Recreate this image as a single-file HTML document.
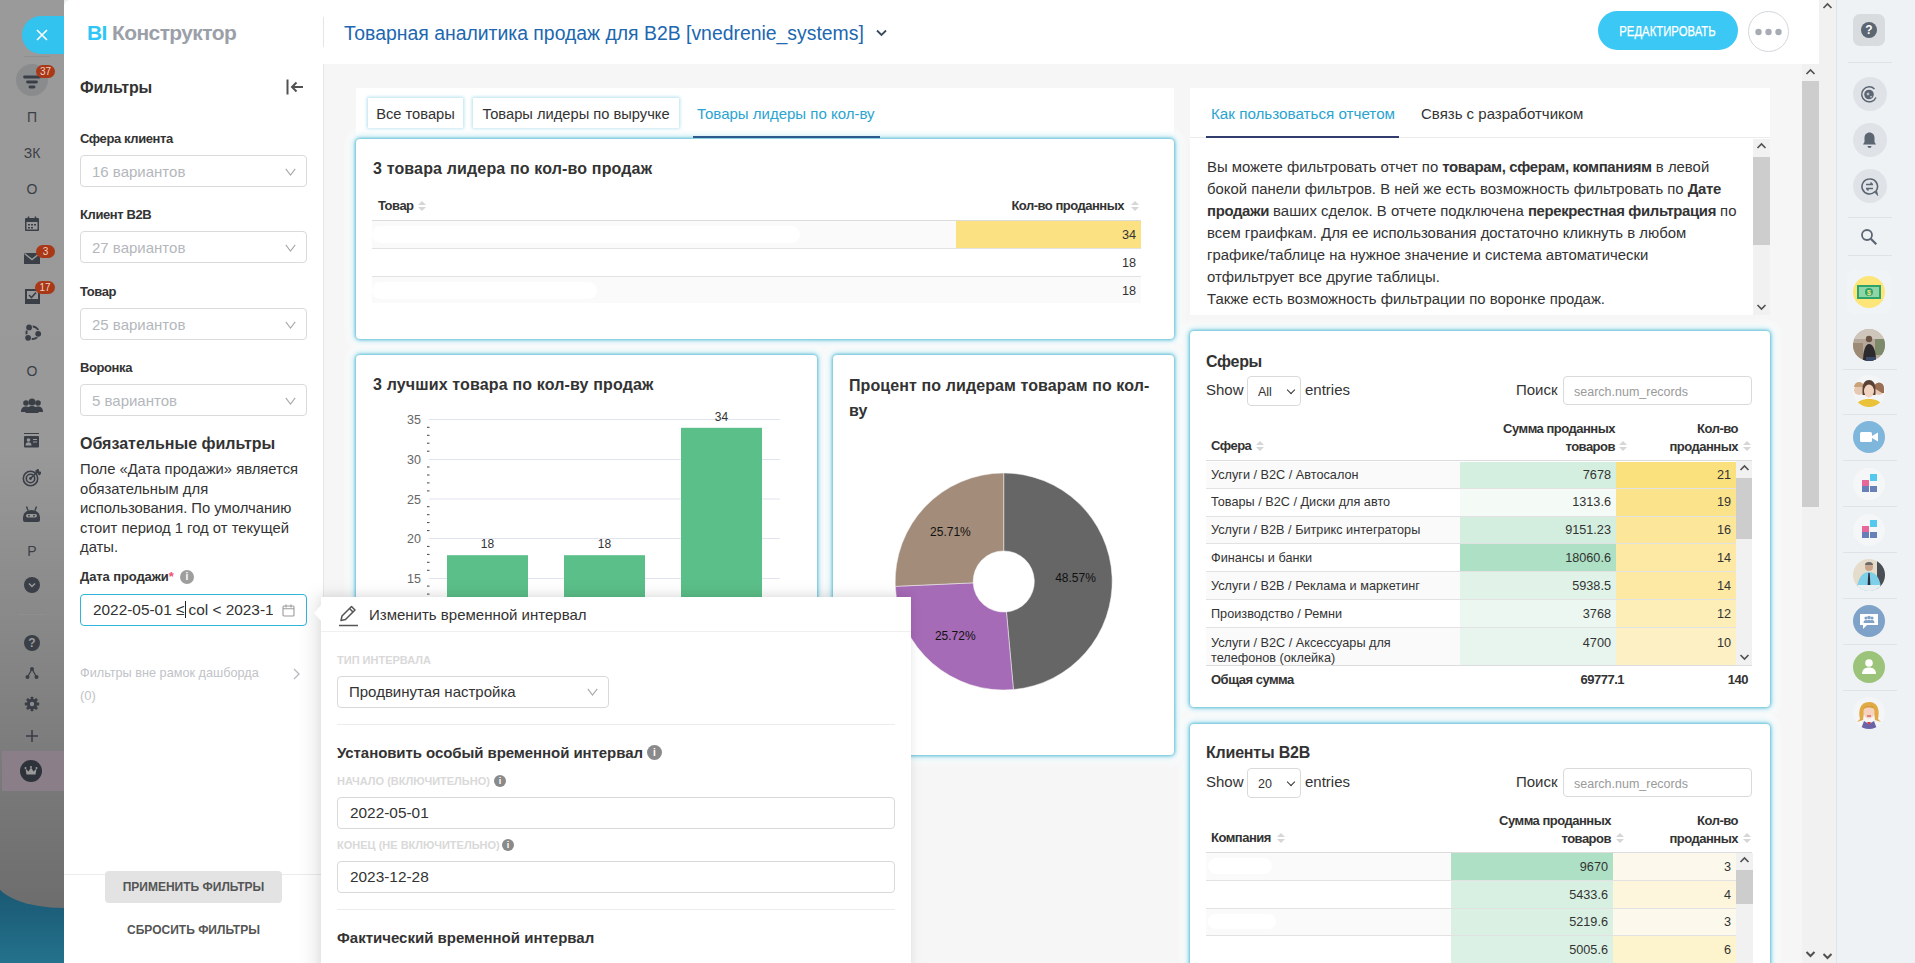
<!DOCTYPE html>
<html><head><meta charset="utf-8">
<style>
*{box-sizing:border-box;margin:0;padding:0}
html,body{width:1915px;height:963px;overflow:hidden;background:#fff;font-family:"Liberation Sans",sans-serif;color:#333}
.a{position:absolute}
#lside{left:-5px;top:0;width:69px;height:908px;background:linear-gradient(#9a9a9a 0px,#999 450px,#6d6d6d 908px);border-bottom-left-radius:80px 34px}
#teal{left:0;top:860px;width:64px;height:103px;background:linear-gradient(#17506a,#1d5f7a 50px,#24728d 103px)}
#panel{left:64px;top:0;width:1755px;height:963px;background:#fff;border-top-left-radius:6px}
#main{left:323px;top:64px;width:1479px;height:899px;background:#f6f6f6;border-left:1px solid #e6e6e6}
#rbar{left:1836px;top:0;width:79px;height:963px;background:#eef2f4;border-left:1px solid #dfe5ea}
#oscroll{left:1819px;top:0;width:17px;height:963px;background:#f1f1f1}
#iscroll{left:1802px;top:64px;width:17px;height:899px;background:#f1f1f1}
.sbt{left:0;width:64px;text-align:center;font-size:14px;line-height:18px;color:#3a3f47}
.card{background:#fff;border-radius:4px;box-shadow:0 0 3px 1px rgba(80,185,212,.85),0 0 6px 3px rgba(130,208,228,.45),0 0 6px 8px rgba(255,255,255,.9)}
.lbl{font-size:13px;font-weight:bold;color:#333;letter-spacing:-0.4px}
.rbc{left:1853px;width:34px;height:34px;border-radius:50%;background:#dfe3e7}
.rbav{left:1853px;width:32px;height:32px;border-radius:50%}
.tbtn{height:30px;background:#fff;box-shadow:0 0 3px 1px rgba(120,200,225,.55);font-size:14.7px;line-height:32px;text-align:center;color:#333;white-space:nowrap}
.wt{font-size:16px;font-weight:bold;line-height:22px;color:#333;white-space:nowrap;letter-spacing:0.15px}
.th{font-size:13px;font-weight:bold;line-height:17px;color:#333;white-space:nowrap;letter-spacing:-0.5px}
.td{font-size:12.7px;line-height:19px;color:#333;white-space:nowrap}
.r{text-align:right}
#infotext b{letter-spacing:-0.35px}
.srt{width:8px;height:11px;margin:1px 0 0 1px}
.srt:before{content:"";position:absolute;left:0;top:0;border-left:4px solid transparent;border-right:4px solid transparent;border-bottom:4.5px solid #d6d6d6}
.srt:after{content:"";position:absolute;left:0;top:5.5px;border-left:4px solid transparent;border-right:4px solid transparent;border-top:4.5px solid #d6d6d6}
.sh{font-size:15px;line-height:20px;color:#333;white-space:nowrap}
.ssel{width:54px;height:30px;border:1px solid #dadada;border-radius:4px;font-size:12.5px;line-height:30px;padding-left:10px;color:#333}
.ssel:after{content:"";position:absolute;left:40px;top:10px;width:5px;height:5px;border-right:1.5px solid #333;border-bottom:1.5px solid #333;transform:rotate(45deg)}
.sinp{width:189px;height:29px;border:1px solid #dadada;border-radius:4px;font-size:12.5px;line-height:30px;padding-left:10px;color:#9a9a9a;background:#fff}
.plb{font-size:11px;font-weight:bold;line-height:15px;color:#d9d9d9;margin-top:1px;white-space:nowrap}
.pinf{border-radius:50%;background:#8a8a8a;color:#fff;text-align:center;font-weight:bold}
.pinp{width:558px;height:32px;border:1px solid #d9d9d9;border-radius:4px;font-size:15.4px;line-height:30px;padding-left:12px;color:#333}
.sel{width:227px;height:32px;border:1px solid #dadada;border-radius:4px;font-size:15px;color:#b4b7bc;padding:7px 0 0 11px}
.chev{position:absolute;left:204px;top:12px}
</style></head><body>
<div id="teal" class="a"></div>
<div id="lside" class="a"></div>
<div class="a" style="left:64px;top:0;width:10px;height:10px;background:#e9eef1"></div>
<div id="panel" class="a"></div>
<div id="main" class="a"></div>
<div id="oscroll" class="a"></div>
<div id="iscroll" class="a"></div>
<div id="rbar" class="a"></div>


<!-- left sidebar icons -->
<div class="a" style="left:22px;top:16px;width:42px;height:38px;background:#33c3ef;border-radius:19px 0 0 19px"></div>
<svg class="a" style="left:35px;top:28px" width="14" height="14" viewBox="0 0 14 14"><path d="M2 2l10 10M12 2L2 12" stroke="#fff" stroke-width="1.6"/></svg>
<div class="a" style="left:24px;top:56px;width:26px;height:1px;background:#8f8f8f"></div>
<div class="a" style="left:16px;top:64px;width:32px;height:32px;border-radius:50%;background:#8a8b8d"></div>
<svg class="a" style="left:23px;top:74px" width="18" height="16" viewBox="0 0 18 16"><path d="M1.5 3h15M4.5 8h9M7 13h4" stroke="#3a3f47" stroke-width="2.8" stroke-linecap="round"/></svg>
<div class="a" style="left:36px;top:65px;width:19px;height:13px;border-radius:7px;background:#a93817;color:#f0d0c4;font-size:10px;line-height:13px;text-align:center">37</div>
<div class="a sbt" style="top:108px">П</div>
<div class="a sbt" style="top:144px">ЗК</div>
<div class="a sbt" style="top:180px">О</div>
<svg class="a" style="left:23px;top:215px" width="18" height="18" viewBox="0 0 18 18"><rect x="2" y="3" width="14" height="13" rx="1" fill="#3a3f47"/><rect x="3.5" y="7" width="11" height="7.5" fill="#9a9a9a"/><path d="M5 9h2v1.5H5zM8 9h2v1.5H8zM11 9h2v1.5h-2zM5 12h2v1.5H5zM8 12h2v1.5H8z" fill="#3a3f47"/><path d="M5.5 1.5v3M12.5 1.5v3" stroke="#3a3f47" stroke-width="1.6"/></svg>
<svg class="a" style="left:24px;top:252px" width="16" height="13" viewBox="0 0 16 13"><path d="M0 1h16v11H0z" fill="#3a3f47"/><path d="M0.5 1.5l7.5 6 7.5-6" stroke="#9a9a9a" stroke-width="1.4" fill="none"/></svg>
<div class="a" style="left:36px;top:245px;width:19px;height:13px;border-radius:7px;background:#a93817;color:#f0d0c4;font-size:10px;line-height:13px;text-align:center">3</div>
<svg class="a" style="left:24px;top:288px" width="17" height="17" viewBox="0 0 17 17"><rect x="1" y="1" width="15" height="15" fill="#3a3f47"/><rect x="3" y="3" width="11" height="8" fill="#9a9a9a"/><path d="M5 7l2.5 2.5L12 4.5" stroke="#3a3f47" stroke-width="1.6" fill="none"/></svg>
<div class="a" style="left:35px;top:281px;width:20px;height:13px;border-radius:7px;background:#a93817;color:#f0d0c4;font-size:10px;line-height:13px;text-align:center">17</div>
<svg class="a" style="left:23px;top:322px" width="20" height="20" viewBox="0 0 20 20"><circle cx="9.6" cy="10.8" r="6.2" fill="none" stroke="#3a3f47" stroke-width="2"/><circle cx="6.1" cy="5.4" r="3.8" fill="#999"/><circle cx="15.2" cy="11.8" r="3.8" fill="#999"/><circle cx="5.1" cy="15.8" r="3.8" fill="#999"/><circle cx="6.1" cy="5.4" r="2.9" fill="#3a3f47"/><circle cx="15.2" cy="11.8" r="2.9" fill="#3a3f47"/><circle cx="5.1" cy="15.8" r="2.9" fill="#3a3f47"/></svg>
<div class="a sbt" style="top:362px">О</div>
<svg class="a" style="left:21px;top:397px" width="22" height="16" viewBox="0 0 22 16"><circle cx="11" cy="5" r="3.5" fill="#3a3f47"/><circle cx="5" cy="6" r="2.8" fill="#3a3f47"/><circle cx="17" cy="6" r="2.8" fill="#3a3f47"/><path d="M4.5 16c0-5 3-7 6.5-7s6.5 2 6.5 7z" fill="#3a3f47"/><path d="M0 15c0-4 2-5.5 5-5.5 1 0 2 .3 2.5 1L5 15zM22 15c0-4-2-5.5-5-5.5-1 0-2 .3-2.5 1L17 15z" fill="#3a3f47"/></svg>
<svg class="a" style="left:23px;top:433px" width="17" height="15" viewBox="0 0 17 15"><path d="M1 0.5h15" stroke="#3a3f47" stroke-width="1"/><rect x="1" y="3" width="15" height="11.5" rx="1" fill="#3a3f47"/><circle cx="5.5" cy="7" r="1.8" fill="#9a9a9a"/><path d="M2.5 12.5c0-2.5 1.3-3.3 3-3.3s3 .8 3 3.3z" fill="#9a9a9a"/><path d="M10 6.5h4M10 9h4" stroke="#9a9a9a" stroke-width="1.2"/></svg>
<svg class="a" style="left:22px;top:469px" width="19" height="18" viewBox="0 0 19 18"><circle cx="8.5" cy="9.5" r="7.2" fill="none" stroke="#3a3f47" stroke-width="1.6"/><circle cx="8.5" cy="9.5" r="4.2" fill="none" stroke="#3a3f47" stroke-width="1.6"/><circle cx="8.5" cy="9.5" r="1.4" fill="#3a3f47"/><path d="M8.5 9.5L16 2M13.5 2.5l2.5-2 .5 2.5 2.5.5-2 2.5" stroke="#3a3f47" stroke-width="1.5" fill="#3a3f47"/></svg>
<svg class="a" style="left:22px;top:506px" width="19" height="17" viewBox="0 0 19 17"><path d="M4.5 0.5l1.5 4M14.5 0.5l-1.5 4" stroke="#3a3f47" stroke-width="1.4"/><path d="M1 12c0-5 3.5-8 8.5-8s8.5 3 8.5 8v2a2 2 0 0 1-2 2H3a2 2 0 0 1-2-2z" fill="#3a3f47"/><rect x="4" y="8" width="11" height="3.5" rx="1.7" fill="#9a9a9a"/><circle cx="7" cy="9.7" r=".9" fill="#3a3f47"/><circle cx="12" cy="9.7" r=".9" fill="#3a3f47"/></svg>
<div class="a sbt" style="top:542px">Р</div>
<div class="a" style="left:24px;top:577px;width:16px;height:16px;border-radius:50%;background:#3a3f47"></div>
<svg class="a" style="left:27px;top:581px" width="10" height="8" viewBox="0 0 10 8"><path d="M2 2.5l3 3 3-3" stroke="#9a9a9a" stroke-width="1.5" fill="none"/></svg>
<div class="a" style="left:18px;top:614px;width:28px;height:1px;background:#8e8e8e"></div>
<div class="a" style="left:24px;top:635px;width:16px;height:16px;border-radius:50%;background:#3a3f47;color:#9a9a9a;font-weight:bold;font-size:12px;line-height:16px;text-align:center">?</div>
<svg class="a" style="left:24px;top:665px" width="16" height="16" viewBox="0 0 16 16"><circle cx="8" cy="4" r="2" fill="#3a3f47"/><circle cx="3.5" cy="12" r="2" fill="#3a3f47"/><circle cx="12.5" cy="12" r="2" fill="#3a3f47"/><path d="M8 4L3.5 12M8 4l4.5 8" stroke="#3a3f47" stroke-width="1.3"/></svg>
<svg class="a" style="left:24px;top:696px" width="16" height="16" viewBox="0 0 16 16"><g fill="#3a3f47"><circle cx="8" cy="8" r="5.2"/><rect x="6.6" y="0.8" width="2.8" height="14.4" rx=".6"/><rect x="0.8" y="6.6" width="14.4" height="2.8" rx=".6"/><rect x="6.6" y="0.8" width="2.8" height="14.4" rx=".6" transform="rotate(45 8 8)"/><rect x="6.6" y="0.8" width="2.8" height="14.4" rx=".6" transform="rotate(-45 8 8)"/></g><circle cx="8" cy="8" r="2.2" fill="#8d8d8d"/></svg>
<svg class="a" style="left:24px;top:728px" width="16" height="16" viewBox="0 0 16 16"><path d="M8 2v12M2 8h12" stroke="#3a3f47" stroke-width="1.6"/></svg>
<div class="a" style="left:2px;top:751px;width:62px;height:40px;background:#8a7e88"></div>
<div class="a" style="left:20px;top:760px;width:22px;height:22px;border-radius:50%;background:#2e333b"></div>
<svg class="a" style="left:24px;top:765px" width="14" height="12" viewBox="0 0 14 12"><path d="M1.5 3.5l3 3 2.5-4 2.5 4 3-3-1 6H2.5z" fill="#9a9a9a"/><circle cx="1.5" cy="3" r="1" fill="#9a9a9a"/><circle cx="7" cy="2" r="1" fill="#9a9a9a"/><circle cx="12.5" cy="3" r="1" fill="#9a9a9a"/></svg>
<!-- header -->
<div class="a" style="left:87px;top:18.5px;font-size:21px;line-height:28px;font-weight:bold;color:#9ba0a8;letter-spacing:-0.6px;white-space:nowrap"><span style="color:#2fc6f6">BI</span> Конструктор</div>
<div class="a" style="left:323px;top:17px;width:1px;height:30px;background:#e3e5e8"></div>

<div class="a" style="left:344px;top:19px;font-size:19.4px;line-height:28px;color:#2067b0;white-space:nowrap" id="ttl">Товарная аналитика продаж для B2B [vnedrenie_systems]</div>
<svg class="a" style="left:875px;top:28px" width="13" height="10" viewBox="0 0 13 10"><path d="M2 2.5l4.5 4.5L11 2.5" stroke="#3a4a5c" stroke-width="1.8" fill="none"/></svg>
<div class="a" style="left:1598px;top:11px;width:140px;height:39px;border-radius:20px;background:#3bc8f5;color:#fff;font-size:14px;line-height:41px;text-align:center;-webkit-text-stroke:0.25px #fff"><span id="edt" style="display:inline-block;transform:scaleX(0.81)">РЕДАКТИРОВАТЬ</span></div>
<div class="a" style="left:1748px;top:11px;width:41px;height:41px;border-radius:50%;border:1px solid #d3d7dc;background:#fff"></div>
<svg class="a" style="left:1753px;top:26.5px" width="30" height="10" viewBox="0 0 30 10"><circle cx="5.5" cy="5" r="3.2" fill="#a7acb4"/><circle cx="15.5" cy="5" r="3.2" fill="#a7acb4"/><circle cx="25.5" cy="5" r="3.2" fill="#a7acb4"/></svg>
<!-- scroll arrows -->
<svg class="a" style="left:1821px;top:1px" width="13" height="10" viewBox="0 0 13 10"><path d="M2.5 7l4-4 4 4" stroke="#505050" stroke-width="1.6" fill="none"/></svg>
<svg class="a" style="left:1821px;top:951px" width="13" height="10" viewBox="0 0 13 10"><path d="M2.5 3l4 4 4-4" stroke="#505050" stroke-width="2" fill="none"/></svg>
<svg class="a" style="left:1804px;top:67px" width="13" height="10" viewBox="0 0 13 10"><path d="M2.5 7l4-4 4 4" stroke="#505050" stroke-width="1.6" fill="none"/></svg>
<div class="a" style="left:1802px;top:81px;width:17px;height:426px;background:#cdcdcd"></div>
<svg class="a" style="left:1804px;top:948.5px" width="13" height="10" viewBox="0 0 13 10"><path d="M2.5 3l4 4 4-4" stroke="#505050" stroke-width="2" fill="none"/></svg>
<!-- right bar -->
<div class="a" style="left:1853px;top:14px;width:32px;height:32px;border-radius:7px;background:#d9dcdf"></div>
<div class="a" style="left:1861px;top:22px;width:16px;height:16px;border-radius:50%;background:#5c6572;color:#fff;font-size:12px;font-weight:bold;line-height:16px;text-align:center">?</div>
<div class="a" style="left:1848px;top:62px;width:44px;height:1px;background:#dfe3e7"></div>
<div class="a rbc" style="top:77px"></div>
<svg class="a" style="left:1860px;top:85px" width="19" height="19" viewBox="0 0 19 19"><path d="M16 12.5A7.5 7.5 0 1 1 14.5 4" stroke="#5c6572" stroke-width="1.5" fill="none"/><circle cx="9" cy="9.5" r="4.8" fill="#5c6572"/><path d="M8 7l.6 1.4 1.4.6-1.4.6L8 11l-.6-1.4L6 9l1.4-.6zM11 10.5l.4.9.9.4-.9.4-.4.9-.4-.9-.9-.4.9-.4z" fill="#dfe3e7"/></svg>
<div class="a rbc" style="top:123px"></div>
<svg class="a" style="left:1861px;top:131px" width="17" height="18" viewBox="0 0 17 18"><path d="M8.5 1.5c-3 0-5 2.3-5 5.5v4L2 13.5h13L13.5 11V7c0-3.2-2-5.5-5-5.5z" fill="#5c6572"/><path d="M6.5 15a2 2 0 0 0 4 0z" fill="#5c6572"/></svg>
<div class="a rbc" style="top:169px"></div>
<svg class="a" style="left:1860px;top:177px" width="19" height="19" viewBox="0 0 19 19"><path d="M9.5 2a7.5 7.5 0 1 0 5.3 12.8L17 17l-.8-3.3A7.5 7.5 0 0 0 9.5 2z" fill="none" stroke="#5c6572" stroke-width="1.6"/><path d="M6 7.5h7M10.5 5.5l2 2M6 11.5h7M8.5 13.5l-2-2" stroke="#5c6572" stroke-width="1.5" fill="none"/></svg>
<div class="a" style="left:1848px;top:217px;width:44px;height:1px;background:#dfe3e7"></div>
<svg class="a" style="left:1860px;top:228px" width="18" height="18" viewBox="0 0 18 18"><circle cx="7" cy="7" r="5" fill="none" stroke="#5c6572" stroke-width="1.8"/><path d="M10.8 10.8l5.5 5.5" stroke="#5c6572" stroke-width="2.2"/></svg>
<div class="a" style="left:1848px;top:255px;width:44px;height:1px;background:#dfe3e7"></div>
<div class="a" style="left:1847px;top:270px;width:44px;height:44px;border-radius:8px;background:#f1f4f6"></div>
<div class="a" style="left:1853px;top:276px;width:32px;height:32px;border-radius:50%;background:#fde57a"></div>
<svg class="a" style="left:1856px;top:284px" width="26" height="16" viewBox="0 0 26 16"><rect x="1" y="1" width="24" height="14" fill="#2ea46a"/><rect x="3" y="3" width="20" height="10" fill="#8ed6a8"/><circle cx="13" cy="8" r="4" fill="#2ea46a"/><text x="13" y="11" font-size="7" text-anchor="middle" fill="#fde57a" font-family="Liberation Sans" font-weight="bold">$</text></svg>
<svg class="a" style="left:1853px;top:329px" width="32" height="32" viewBox="0 0 32 32"><defs><clipPath id="cc"><circle cx="16" cy="16" r="16"/></clipPath></defs><g clip-path="url(#cc)"><rect width="32" height="32" fill="#b5a89a"/><rect x="0" y="0" width="32" height="10" fill="#cfc6bb"/><rect x="0" y="14" width="10" height="18" fill="#9c8a74"/><rect x="22" y="10" width="10" height="16" fill="#7d8a6a"/><circle cx="16" cy="10" r="3.2" fill="#6b5445"/><path d="M10 32c0-9 2-17 6-17s7 6 7 17z" fill="#2c2a2c"/><rect x="13" y="28" width="10" height="4" fill="#3a4a6a"/></g></svg>
<div class="a" style="left:1843px;top:369px;width:54px;height:1px;background:#dfe3e7"></div>
<svg class="a" style="left:1853px;top:375px" width="32" height="32" viewBox="0 0 32 32"><defs><clipPath id="cc2"><circle cx="16" cy="16" r="16"/></clipPath></defs><g clip-path="url(#cc2)"><rect width="32" height="32" fill="#f4f5f6"/><circle cx="6" cy="15" r="5" fill="#e6c9b2"/><path d="M1 12a5 5 0 0 1 10 0z" fill="#c9a27c"/><circle cx="26" cy="15" r="5" fill="#e8c8b4"/><path d="M21 13a5 5.5 0 0 1 10 0v5h-2z" fill="#9a6e52"/><path d="M9.5 14c0-6 3-9 6.5-9s6.5 3 6.5 9v6h-13z" fill="#5a4034"/><ellipse cx="16" cy="16" rx="5" ry="6.5" fill="#f1d3c0"/><path d="M3 32c1-6 6-8 13-8s12 2 13 8z" fill="#e9c23a"/></g></svg>
<div class="a" style="left:1843px;top:414px;width:54px;height:1px;background:#dfe3e7"></div>
<div class="a rbav" style="top:421px;background:#7fb6dc"></div>
<svg class="a" style="left:1859px;top:429px" width="20" height="16" viewBox="0 0 20 16"><rect x="1" y="3" width="12" height="10" rx="1.5" fill="#fff"/><path d="M13 7l6-3.5v9L13 9z" fill="#fff"/></svg>
<div class="a" style="left:1843px;top:460px;width:54px;height:1px;background:#dfe3e7"></div>
<div class="a rbav" style="top:468px;background:#f5f6f8"></div>
<svg class="a" style="left:1858px;top:472px" width="22" height="22" viewBox="0 0 22 22"><rect x="12" y="2" width="7" height="7" fill="#55c8ee"/><rect x="4" y="8" width="7" height="6" fill="#e8679a"/><rect x="4" y="14" width="7" height="6" fill="#6880b8"/><rect x="12" y="14" width="7" height="6" fill="#6880b8"/></svg>
<div class="a" style="left:1843px;top:506px;width:54px;height:1px;background:#dfe3e7"></div>
<div class="a rbav" style="top:514px;background:#f5f6f8"></div>
<svg class="a" style="left:1858px;top:518px" width="22" height="22" viewBox="0 0 22 22"><rect x="12" y="2" width="7" height="7" fill="#55c8ee"/><rect x="4" y="8" width="7" height="6" fill="#e8679a"/><rect x="4" y="14" width="7" height="6" fill="#6880b8"/><rect x="12" y="14" width="7" height="6" fill="#6880b8"/></svg>
<div class="a" style="left:1843px;top:552px;width:54px;height:1px;background:#dfe3e7"></div>
<svg class="a" style="left:1853px;top:559px" width="32" height="32" viewBox="0 0 32 32"><defs><clipPath id="cc3"><circle cx="16" cy="16" r="16"/></clipPath></defs><g clip-path="url(#cc3)"><rect width="32" height="32" fill="#e6dccb"/><rect x="24" y="0" width="8" height="32" fill="#4a4f55"/><circle cx="16" cy="8" r="4" fill="#c9a58c"/><path d="M12 6a4 3 0 0 1 8 0z" fill="#6a6a6a"/><path d="M4 32c0-12 5-19 12-19s12 7 12 19z" fill="#7ed0e8"/><path d="M15.3 14h1.4l.8 14h-3z" fill="#2a2f3a"/><rect x="5" y="26" width="22" height="6" fill="#e9eef0"/></g></svg>
<div class="a" style="left:1843px;top:598px;width:54px;height:1px;background:#dfe3e7"></div>
<div class="a rbav" style="top:605px;background:#7fa3c8"></div>
<svg class="a" style="left:1858px;top:612px" width="22" height="19" viewBox="0 0 22 19"><path d="M2 2h18v11H9l-4 4v-4H2z" fill="#fff"/><circle cx="8" cy="6" r="1.6" fill="#7fa3c8"/><circle cx="11" cy="5.5" r="1.8" fill="#7fa3c8"/><circle cx="14" cy="6" r="1.6" fill="#7fa3c8"/><path d="M5.5 11c0-2 1-3 2.5-3s2.5 1 2.5 3zM8.5 11c0-2.3 1-3.3 2.5-3.3s2.5 1 2.5 3.3zM11.5 11c0-2 1-3 2.5-3s2.5 1 2.5 3z" fill="#7fa3c8"/></svg>
<div class="a" style="left:1843px;top:644px;width:54px;height:1px;background:#dfe3e7"></div>
<div class="a rbav" style="top:651px;background:#9bc47a"></div>
<svg class="a" style="left:1860px;top:657px" width="18" height="20" viewBox="0 0 18 20"><circle cx="9" cy="6" r="3.8" fill="#fff"/><path d="M2 17c0-4.5 3-6.5 7-6.5s7 2 7 6.5z" fill="#fff"/></svg>
<div class="a" style="left:1843px;top:690px;width:54px;height:1px;background:#dfe3e7"></div>
<svg class="a" style="left:1853px;top:697px" width="32" height="32" viewBox="0 0 32 32"><defs><clipPath id="cc4"><circle cx="16" cy="16" r="16"/></clipPath></defs><g clip-path="url(#cc4)"><rect width="32" height="32" fill="#f4f5f7"/><path d="M7 22c-2-8 0-17 9-17s11 8 9 17l3 3-6-2-1-8H11l-1 8-6 2z" fill="#e0aa45"/><ellipse cx="16" cy="15" rx="5.5" ry="6.5" fill="#f5d3bf"/><path d="M10 12c2-4 9-5 12 0-3-2-9-2-12 0z" fill="#d79a35"/><path d="M14 19h4" stroke="#c8303c" stroke-width="1.2"/><path d="M8 32l3-8 5 3 5-3 3 8z" fill="#6c62a8"/><path d="M14 25l2 3 2-3z" fill="#d33a3a"/></g></svg>

<!-- MAIN: tabs -->
<div class="a" style="left:356px;top:88px;width:818px;height:51px;background:#fff"></div>
<div class="a tbtn" style="left:368px;top:98px;width:95px">Все товары</div>
<div class="a tbtn" style="left:473px;top:98px;width:206px">Товары лидеры по выручке</div>
<div class="a" style="left:697px;top:104px;font-size:15px;line-height:20px;color:#2aa4d0;white-space:nowrap">Товары лидеры по кол-ву</div>
<!-- widget 1 -->
<div class="a card" style="left:356px;top:139px;width:818px;height:200px"></div>
<div class="a" style="left:693px;top:136px;width:187px;height:2px;background:#2d5b8e"></div>
<div class="a wt" style="left:373px;top:158px">3 товара лидера по кол-во продаж</div>
<div class="a th" style="left:378px;top:197px">Товар</div><div class="a srt" style="left:417px;top:200px"></div>
<div class="a th" style="left:800px;top:197px;width:324px;text-align:right">Кол-во проданных</div><div class="a srt" style="left:1130px;top:200px"></div>
<div class="a" style="left:372px;top:220px;width:769px;height:1px;background:#dcdcdc"></div>
<div class="a" style="left:372px;top:221px;width:584px;height:27px;background:#fafafa"></div>
<div class="a" style="left:372px;top:226px;width:428px;height:17px;border-radius:9px;background:#fff"></div>
<div class="a" style="left:956px;top:221px;width:185px;height:27px;background:#fbe182"></div>
<div class="a td r" style="left:956px;top:225.5px;width:180px">34</div>
<div class="a" style="left:372px;top:248px;width:769px;height:1px;background:#e2e2e2"></div>
<div class="a td r" style="left:956px;top:254px;width:180px">18</div>
<div class="a" style="left:372px;top:276px;width:769px;height:1px;background:#e2e2e2"></div>
<div class="a" style="left:372px;top:277px;width:769px;height:26px;background:#fafafa"></div>
<div class="a" style="left:372px;top:282px;width:225px;height:17px;border-radius:9px;background:#fff"></div>
<div class="a td r" style="left:956px;top:281.5px;width:180px">18</div>
<!-- widget 2 bar chart -->
<div class="a card" style="left:356px;top:355px;width:461px;height:400px"></div>
<div class="a wt" style="left:373px;top:374px">3 лучших товара по кол-ву продаж</div>
<svg class="a" style="left:356px;top:355px" width="461" height="400" viewBox="356 355 461 400">
  <g stroke="#dfe4ee" stroke-width="1">
    <path d="M429 419.5H780M429 459.5H780M429 499H780M429 538.5H780M429 578.5H780M429 618H780M429 657.5H780M429 697.5H780"/>
  </g>
  <g stroke="#444" stroke-width="1">
    <path d="M427 602.0H429.5M427 594.1H429.5M427 586.1H429.5M427 570.3H429.5M427 562.3H429.5M427 554.4H429.5M427 546.4H429.5M427 530.6H429.5M427 522.6H429.5M427 514.7H429.5M427 506.7H429.5M427 490.9H429.5M427 482.9H429.5M427 475.0H429.5M427 467.0H429.5M427 451.2H429.5M427 443.2H429.5M427 435.3H429.5M427 427.3H429.5"/>
  </g>
  <g fill="#5bbf89">
    <rect x="447" y="555.2" width="81" height="200"/>
    <rect x="564" y="555.2" width="81" height="200"/>
    <rect x="681" y="427.8" width="81" height="330"/>
  </g>
  <g font-family="Liberation Sans" font-size="12.5" fill="#666" text-anchor="end">
    <text x="421" y="424">35</text><text x="421" y="464">30</text><text x="421" y="503.5">25</text><text x="421" y="543">20</text><text x="421" y="583">15</text>
  </g>
  <g font-family="Liberation Sans" font-size="12" fill="#333" text-anchor="middle">
    <text x="487.5" y="548">18</text><text x="604.5" y="548">18</text><text x="721.5" y="421">34</text>
  </g>
</svg>
<!-- widget 3 pie -->
<div class="a card" style="left:833px;top:355px;width:341px;height:400px"></div>
<div class="a wt" id="pt" style="left:849px;top:374px;width:320px;line-height:24.5px;letter-spacing:0.1px">Процент по лидерам товарам по кол-<br>ву</div>
<svg class="a" style="left:833px;top:355px" width="341" height="400" viewBox="833 355 341 400" id="pie"><path d="M1003.70 473.00A108.5 108.5 0 0 1 1013.44 689.56L1006.45 611.98A30.6 30.6 0 0 0 1003.70 550.90Z" fill="#666666" stroke="#f4f4f4" stroke-width="0.5"/><path d="M1013.44 689.56A108.5 108.5 0 0 1 895.31 586.34L973.13 582.86A30.6 30.6 0 0 0 1006.45 611.98Z" fill="#a66bb6" stroke="#f4f4f4" stroke-width="0.5"/><path d="M895.31 586.34A108.5 108.5 0 0 1 1003.70 473.00L1003.70 550.90A30.6 30.6 0 0 0 973.13 582.86Z" fill="#a38c7a" stroke="#f4f4f4" stroke-width="0.5"/><g font-family="Liberation Sans" font-size="12" fill="#111" text-anchor="middle"><text x="1075.5" y="582">48.57%</text><text x="955.3" y="640">25.72%</text><text x="950.4" y="536.3">25.71%</text></g></svg>

<!-- RIGHT: info widget -->
<div class="a" style="left:1190px;top:88px;width:580px;height:227px;background:#fff"></div>
<div class="a" style="left:1190px;top:137px;width:580px;height:1px;background:#ebebeb"></div>
<div class="a" style="left:1211px;top:104px;font-size:15.2px;line-height:20px;color:#2aa4d0;white-space:nowrap" id="t_how">Как пользоваться отчетом</div>
<div class="a" style="left:1206px;top:136px;width:193px;height:2px;background:#323d6e"></div>
<div class="a" style="left:1421px;top:104px;font-size:15px;line-height:20px;color:#333;white-space:nowrap" id="t_dev">Связь с разработчиком</div>
<div class="a" id="infotext" style="left:1207px;top:156px;width:545px;font-size:14.9px;line-height:22px;color:#333">
<div class="ln">Вы можете фильтровать отчет по <b>товарам, сферам, компаниям</b> в левой</div>
<div class="ln">бокой панели фильтров. В ней же есть возможность фильтровать по <b>Дате</b></div>
<div class="ln"><b>продажи</b> ваших сделок. В отчете подключена <b>перекрестная фильтрация</b> по</div>
<div class="ln">всем граифкам. Для ее использования достаточно кликнуть в любом</div>
<div class="ln">графике/таблице на нужное значение и система автоматически</div>
<div class="ln">отфильтрует все другие таблицы.</div>
<div class="ln">Также есть возможность фильтрации по воронке продаж.</div>
</div>
<div class="a" style="left:1753px;top:139px;width:17px;height:176px;background:#f1f1f1"></div>
<div class="a" style="left:1753px;top:157px;width:17px;height:88px;background:#cdcdcd"></div>
<svg class="a" style="left:1755px;top:141px" width="13" height="10" viewBox="0 0 13 10"><path d="M2.5 7l4-4 4 4" stroke="#505050" stroke-width="1.6" fill="none"/></svg>
<svg class="a" style="left:1755px;top:302px" width="13" height="10" viewBox="0 0 13 10"><path d="M2.5 3l4 4 4-4" stroke="#505050" stroke-width="1.6" fill="none"/></svg>

<!-- Сферы widget -->
<div class="a card" style="left:1190px;top:331px;width:580px;height:376px"></div>
<div class="a" style="left:1206px;top:350.5px;font-size:16px;letter-spacing:-0.3px;font-weight:bold;line-height:22px;color:#333">Сферы</div>
<div class="a sh" style="left:1206px;top:380px">Show</div>
<div class="a ssel" style="left:1247px;top:376px">All</div>
<div class="a sh" style="left:1305px;top:380px">entries</div>
<div class="a sh" style="left:1516px;top:380px">Поиск</div>
<div class="a sinp" style="left:1563px;top:376px">search.num_records</div>
<div class="a th" style="left:1211px;top:437px">Сфера</div><div class="a srt" style="left:1255px;top:440px"></div>
<div class="a th r" style="left:1450px;top:420px;width:165px;line-height:17.5px">Сумма проданных<br>товаров</div><div class="a srt" style="left:1618px;top:440px"></div>
<div class="a th r" style="left:1620px;top:420px;width:118px;line-height:17.5px">Кол-во<br>проданных</div><div class="a srt" style="left:1742px;top:440px"></div>
<div class="a" style="left:1206px;top:460px;width:546px;height:1px;background:#dcdcdc"></div>
<div class="a" style="left:1206px;top:461.5px;width:254px;height:26.5px;background:#fafafa"></div><div class="a" style="left:1460px;top:461.5px;width:156px;height:26.5px;background:#d4efdf"></div><div class="a" style="left:1616px;top:461.5px;width:120px;height:26.5px;background:#fbe07e"></div><div class="a td" style="left:1211px;top:465.8px;line-height:19px">Услуги / B2C / Автосалон</div><div class="a td r" style="left:1500px;top:465.8px;width:111px">7678</div><div class="a td r" style="left:1650px;top:465.8px;width:81px">21</div><div class="a" style="left:1206px;top:489.0px;width:254px;height:26.5px;background:#fff"></div><div class="a" style="left:1460px;top:489.0px;width:156px;height:26.5px;background:#f4faf6"></div><div class="a" style="left:1616px;top:489.0px;width:120px;height:26.5px;background:#fbe38c"></div><div class="a" style="left:1206px;top:488.0px;width:530px;height:1px;background:#e2e2e2"></div><div class="a td" style="left:1211px;top:493.2px;line-height:19px">Товары / B2C / Диски для авто</div><div class="a td r" style="left:1500px;top:493.2px;width:111px">1313.6</div><div class="a td r" style="left:1650px;top:493.2px;width:81px">19</div><div class="a" style="left:1206px;top:516.5px;width:254px;height:26.7px;background:#fafafa"></div><div class="a" style="left:1460px;top:516.5px;width:156px;height:26.7px;background:#d3eede"></div><div class="a" style="left:1616px;top:516.5px;width:120px;height:26.7px;background:#fce69a"></div><div class="a" style="left:1206px;top:515.5px;width:530px;height:1px;background:#e2e2e2"></div><div class="a td" style="left:1211px;top:520.9px;line-height:19px">Услуги / B2B / Битрикс интеграторы</div><div class="a td r" style="left:1500px;top:520.9px;width:111px">9151.23</div><div class="a td r" style="left:1650px;top:520.9px;width:81px">16</div><div class="a" style="left:1206px;top:544.2px;width:254px;height:27.2px;background:#fff"></div><div class="a" style="left:1460px;top:544.2px;width:156px;height:27.2px;background:#ade0c4"></div><div class="a" style="left:1616px;top:544.2px;width:120px;height:27.2px;background:#fde8a4"></div><div class="a" style="left:1206px;top:543.2px;width:530px;height:1px;background:#e2e2e2"></div><div class="a td" style="left:1211px;top:548.8px;line-height:19px">Финансы и банки</div><div class="a td r" style="left:1500px;top:548.8px;width:111px">18060.6</div><div class="a td r" style="left:1650px;top:548.8px;width:81px">14</div><div class="a" style="left:1206px;top:572.4px;width:254px;height:26.8px;background:#fafafa"></div><div class="a" style="left:1460px;top:572.4px;width:156px;height:26.8px;background:#e1f3e8"></div><div class="a" style="left:1616px;top:572.4px;width:120px;height:26.8px;background:#fde8a4"></div><div class="a" style="left:1206px;top:571.4px;width:530px;height:1px;background:#e2e2e2"></div><div class="a td" style="left:1211px;top:576.8px;line-height:19px">Услуги / B2B / Реклама и маркетинг</div><div class="a td r" style="left:1500px;top:576.8px;width:111px">5938.5</div><div class="a td r" style="left:1650px;top:576.8px;width:81px">14</div><div class="a" style="left:1206px;top:600.2px;width:254px;height:27.2px;background:#fff"></div><div class="a" style="left:1460px;top:600.2px;width:156px;height:27.2px;background:#ecf7f1"></div><div class="a" style="left:1616px;top:600.2px;width:120px;height:27.2px;background:#fdedb6"></div><div class="a" style="left:1206px;top:599.2px;width:530px;height:1px;background:#e2e2e2"></div><div class="a td" style="left:1211px;top:604.8px;line-height:19px">Производство / Ремни</div><div class="a td r" style="left:1500px;top:604.8px;width:111px">3768</div><div class="a td r" style="left:1650px;top:604.8px;width:81px">12</div><div class="a" style="left:1206px;top:628.4px;width:254px;height:36.9px;background:#fafafa"></div><div class="a" style="left:1460px;top:628.4px;width:156px;height:36.9px;background:#e8f5ee"></div><div class="a" style="left:1616px;top:628.4px;width:120px;height:36.9px;background:#fdf0c4"></div><div class="a" style="left:1206px;top:627.4px;width:530px;height:1px;background:#e2e2e2"></div><div class="a td" style="left:1211px;top:635.5px;line-height:15.5px">Услуги / B2C / Аксессуары для<br>телефонов (оклейка)</div><div class="a td r" style="left:1500px;top:633.5px;width:111px">4700</div><div class="a td r" style="left:1650px;top:633.5px;width:81px">10</div>
<div class="a" style="left:1736px;top:461px;width:16px;height:204px;background:#f1f1f1"></div>
<div class="a" style="left:1736px;top:478px;width:16px;height:61px;background:#cdcdcd"></div>
<svg class="a" style="left:1738px;top:463px" width="13" height="10" viewBox="0 0 13 10"><path d="M2.5 7l4-4 4 4" stroke="#505050" stroke-width="1.6" fill="none"/></svg>
<svg class="a" style="left:1738px;top:652px" width="13" height="10" viewBox="0 0 13 10"><path d="M2.5 3l4 4 4-4" stroke="#505050" stroke-width="1.6" fill="none"/></svg>
<div class="a" style="left:1206px;top:665px;width:546px;height:1px;background:#dcdcdc"></div>
<div class="a th" style="left:1211px;top:671px">Общая сумма</div>
<div class="a th r" style="left:1500px;top:671px;width:124px">69777.1</div>
<div class="a th r" style="left:1650px;top:671px;width:98px">140</div>

<!-- Клиенты widget -->
<div class="a card" style="left:1190px;top:724px;width:580px;height:260px"></div>
<div class="a" style="left:1206px;top:741.5px;font-size:16px;letter-spacing:-0.2px;font-weight:bold;line-height:22px;color:#333">Клиенты B2B</div>
<div class="a sh" style="left:1206px;top:772px">Show</div>
<div class="a ssel" style="left:1247px;top:768px">20</div>
<div class="a sh" style="left:1305px;top:772px">entries</div>
<div class="a sh" style="left:1516px;top:772px">Поиск</div>
<div class="a sinp" style="left:1563px;top:768px">search.num_records</div>
<div class="a th" style="left:1211px;top:829px">Компания</div><div class="a srt" style="left:1276px;top:832px"></div>
<div class="a th r" style="left:1446px;top:812px;width:165px;line-height:17.5px">Сумма проданных<br>товаров</div><div class="a srt" style="left:1615px;top:832px"></div>
<div class="a th r" style="left:1620px;top:812px;width:118px;line-height:17.5px">Кол-во<br>проданных</div><div class="a srt" style="left:1742px;top:832px"></div>
<div class="a" style="left:1206px;top:852px;width:546px;height:1px;background:#dcdcdc"></div>
<div class="a" style="left:1206px;top:853.0px;width:245px;height:27.2px;background:#fafafa"></div><div class="a" style="left:1208px;top:858.0px;width:64px;height:16.2px;border-radius:9px;background:#fff"></div><div class="a" style="left:1451px;top:853.0px;width:162px;height:27.2px;background:#ade0c4"></div><div class="a" style="left:1613px;top:853.0px;width:123px;height:27.2px;background:#fcf9ec"></div><div class="a td r" style="left:1500px;top:857.6px;width:108px">9670</div><div class="a td r" style="left:1650px;top:857.6px;width:81px">3</div><div class="a" style="left:1206px;top:881.2px;width:245px;height:26.6px;background:#fff"></div><div class="a" style="left:1451px;top:881.2px;width:162px;height:26.6px;background:#d8f0e2"></div><div class="a" style="left:1613px;top:881.2px;width:123px;height:26.6px;background:#fdf6dd"></div><div class="a" style="left:1206px;top:880.2px;width:530px;height:1px;background:#e2e2e2"></div><div class="a td r" style="left:1500px;top:885.5px;width:108px">5433.6</div><div class="a td r" style="left:1650px;top:885.5px;width:81px">4</div><div class="a" style="left:1206px;top:908.8px;width:245px;height:26.6px;background:#fafafa"></div><div class="a" style="left:1208px;top:913.8px;width:68px;height:15.6px;border-radius:9px;background:#fff"></div><div class="a" style="left:1451px;top:908.8px;width:162px;height:26.6px;background:#d9f0e3"></div><div class="a" style="left:1613px;top:908.8px;width:123px;height:26.6px;background:#fcf9ec"></div><div class="a" style="left:1206px;top:907.8px;width:530px;height:1px;background:#e2e2e2"></div><div class="a td r" style="left:1500px;top:913.1px;width:108px">5219.6</div><div class="a td r" style="left:1650px;top:913.1px;width:81px">3</div><div class="a" style="left:1206px;top:936.4px;width:245px;height:26.6px;background:#fff"></div><div class="a" style="left:1451px;top:936.4px;width:162px;height:26.6px;background:#dcf1e5"></div><div class="a" style="left:1613px;top:936.4px;width:123px;height:26.6px;background:#fdf3cc"></div><div class="a" style="left:1206px;top:935.4px;width:530px;height:1px;background:#e2e2e2"></div><div class="a td r" style="left:1500px;top:940.7px;width:108px">5005.6</div><div class="a td r" style="left:1650px;top:940.7px;width:81px">6</div>
<div class="a" style="left:1736px;top:853px;width:17px;height:110px;background:#f1f1f1"></div>
<div class="a" style="left:1736px;top:870px;width:17px;height:34px;background:#cdcdcd"></div>
<svg class="a" style="left:1738px;top:855px" width="13" height="10" viewBox="0 0 13 10"><path d="M2.5 7l4-4 4 4" stroke="#505050" stroke-width="1.6" fill="none"/></svg>
<!-- filter panel -->
<div class="a" style="left:80px;top:77px;font-size:16px;letter-spacing:-0.2px;line-height:22px;font-weight:bold;color:#333">Фильтры</div>
<svg class="a" style="left:284px;top:77px" width="22" height="20" viewBox="0 0 22 20"><path d="M3.5 2.5v15" stroke="#525252" stroke-width="2"/><path d="M19 10H8M12.5 5.5L8 10l4.5 4.5" stroke="#525252" stroke-width="2" fill="none"/></svg>

<div class="a lbl" style="left:80px;top:130px;line-height:17px">Сфера клиента</div>
<div class="a sel" style="left:80px;top:155px">16 вариантов<svg class="chev" width="11" height="8" viewBox="0 0 11 8"><path d="M.8.8l4.7 6.3L10.2.8" fill="none" stroke="#a8a8a8" stroke-width="1.1"/></svg></div>
<div class="a lbl" style="left:80px;top:206px;line-height:17px">Клиент B2B</div>
<div class="a sel" style="left:80px;top:231px">27 вариантов<svg class="chev" width="11" height="8" viewBox="0 0 11 8"><path d="M.8.8l4.7 6.3L10.2.8" fill="none" stroke="#a8a8a8" stroke-width="1.1"/></svg></div>
<div class="a lbl" style="left:80px;top:283px;line-height:17px">Товар</div>
<div class="a sel" style="left:80px;top:308px">25 вариантов<svg class="chev" width="11" height="8" viewBox="0 0 11 8"><path d="M.8.8l4.7 6.3L10.2.8" fill="none" stroke="#a8a8a8" stroke-width="1.1"/></svg></div>
<div class="a lbl" style="left:80px;top:359px;line-height:17px">Воронка</div>
<div class="a sel" style="left:80px;top:384px">5 вариантов<svg class="chev" width="11" height="8" viewBox="0 0 11 8"><path d="M.8.8l4.7 6.3L10.2.8" fill="none" stroke="#a8a8a8" stroke-width="1.1"/></svg></div>

<div class="a" style="left:80px;top:433px;font-size:16px;line-height:22px;font-weight:bold;color:#333">Обязательные фильтры</div>
<div class="a" id="para" style="left:80px;top:460px;width:240px;font-size:14.8px;line-height:19.6px;color:#333;white-space:nowrap"><div class="ln">Поле «Дата продажи» является</div><div class="ln">обязательным для</div><div class="ln">использования. По умолчанию</div><div class="ln">стоит период 1 год от текущей</div><div class="ln">даты.</div></div>
<div class="a lbl" style="left:80px;top:568px;line-height:17px;letter-spacing:-0.1px">Дата продажи<span style="color:#f0506e">*</span></div>
<div class="a" style="left:180px;top:570px;width:14px;height:14px;border-radius:50%;background:#9e9e9e;color:#fff;font-size:10px;line-height:14px;text-align:center;font-weight:bold">i</div>
<div class="a" style="left:80px;top:594px;width:227px;height:32px;border:1px solid #2fb5da;border-radius:4px;overflow:hidden">
  <div class="a" style="left:12px;top:6px;width:180px;overflow:hidden;white-space:nowrap;font-size:15.4px;line-height:18px;color:#333">2022-05-01 ≤<span style="border-left:1px solid #222;margin-left:1px;margin-right:2px"></span>col &lt; 2023-12-28</div>
  <svg class="a" style="left:201px;top:9px" width="13" height="13" viewBox="0 0 13 13"><rect x="1" y="2" width="11" height="10" rx="1" fill="none" stroke="#9a9a9a" stroke-width="1.1"/><path d="M1 4.8h11M4 .5v3M9 .5v3" stroke="#9a9a9a" stroke-width="1.1"/></svg>
</div>
<div class="a" style="left:80px;top:665px;font-size:12.7px;line-height:17px;color:#c0c3c7">Фильтры вне рамок дашборда</div>
<div class="a" style="left:80px;top:687px;font-size:13px;line-height:17px;color:#c0c3c7">(0)</div>
<svg class="a" style="left:292px;top:667px" width="10" height="14" viewBox="0 0 10 14"><path d="M2 2l5 5-5 5" stroke="#b5b8bc" stroke-width="1.3" fill="none"/></svg>

<div class="a" style="left:64px;top:874px;width:259px;height:1px;background:#ececec"></div>
<div class="a" style="left:105px;top:871px;width:177px;height:32px;background:#e3e3e3;border-radius:4px;font-size:12px;font-weight:bold;color:#555;text-align:center;line-height:32px">ПРИМЕНИТЬ ФИЛЬТРЫ</div>
<div class="a" style="left:64px;top:920px;width:259px;font-size:12px;font-weight:bold;color:#555;text-align:center;line-height:20px">СБРОСИТЬ ФИЛЬТРЫ</div>

<!-- POPOVER -->
<div class="a" style="left:321px;top:597px;width:590px;height:380px;background:#fff;box-shadow:-6px 0 18px rgba(0,0,0,.10),0 -2px 8px rgba(0,0,0,.06)"></div>
<svg class="a" style="left:313px;top:604px" width="10" height="18" viewBox="0 0 10 18"><path d="M9 0L1 9l8 9z" fill="#fff"/></svg>
<svg class="a" style="left:337px;top:605px" width="23" height="22" viewBox="0 0 23 22"><path d="M4 15.5l1-4.5L14.5 1.5 18 5 8.5 14.5z" fill="none" stroke="#555" stroke-width="1.5" stroke-linejoin="round"/><path d="M12.5 3.5L16 7" stroke="#555" stroke-width="1.5"/><path d="M2 20.5h19" stroke="#555" stroke-width="1.5"/></svg>
<div class="a" style="left:369px;top:605px;font-size:15px;line-height:20px;color:#333;white-space:nowrap" id="p_hdr">Изменить временной интервал</div>
<div class="a" style="left:321px;top:631px;width:590px;height:1px;background:#f0f0f0"></div>
<div class="a plb" style="left:337px;top:652px">ТИП ИНТЕРВАЛА</div>
<div class="a" style="left:337px;top:676px;width:272px;height:32px;border:1px solid #d9d9d9;border-radius:4px"></div>
<div class="a" style="left:349px;top:682px;font-size:15px;line-height:20px;color:#333;white-space:nowrap" id="p_sel">Продвинутая настройка</div>
<svg class="a" style="left:587px;top:688px" width="11" height="8" viewBox="0 0 11 8"><path d="M.8.8l4.7 6.3L10.2.8" fill="none" stroke="#a8a8a8" stroke-width="1.1"/></svg>
<div class="a" style="left:337px;top:724px;width:558px;height:1px;background:#ececec"></div>
<div class="a" style="left:337px;top:742px;font-size:15px;font-weight:bold;line-height:21px;color:#333;white-space:nowrap;letter-spacing:-0.07px" id="p_set">Установить особый временной интервал</div>
<div class="a pinf" style="left:647px;top:745px;width:15px;height:15px;line-height:15px;font-size:10px">i</div>
<div class="a plb" style="left:337px;top:773px" id="p_start">НАЧАЛО (ВКЛЮЧИТЕЛЬНО)</div>
<div class="a pinf" style="left:494px;top:775px;width:12px;height:12px;line-height:12px;font-size:9px">i</div>
<div class="a pinp" style="left:337px;top:797px">2022-05-01</div>
<div class="a plb" style="left:337px;top:837px" id="p_end">КОНЕЦ (НЕ ВКЛЮЧИТЕЛЬНО)</div>
<div class="a pinf" style="left:502px;top:839px;width:12px;height:12px;line-height:12px;font-size:9px">i</div>
<div class="a pinp" style="left:337px;top:861px">2023-12-28</div>
<div class="a" style="left:337px;top:909px;width:558px;height:1px;background:#ececec"></div>
<div class="a" style="left:337px;top:927px;font-size:15px;font-weight:bold;line-height:21px;color:#333;white-space:nowrap" id="p_fact">Фактический временной интервал</div>
</body></html>
